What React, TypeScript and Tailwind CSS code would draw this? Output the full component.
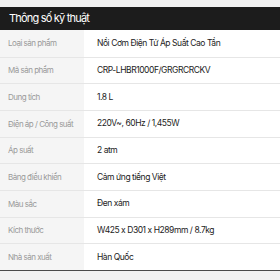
const specs = [
  ["Loại sản phẩm", "Nồi Cơm Điện Tử Áp Suất Cao Tần"],
  ["Mã sản phẩm", "CRP-LHBR1000F/GRGRCRCKV"],
  ["Dung tích", "1.8 L"],
  ["Điện áp / Công suất", "220V~, 60Hz / 1,455W"],
  ["Áp suất", "2 atm"],
  ["Bảng điều khiển", "Cảm ứng tiếng Việt"],
  ["Màu sắc", "Đen xám"],
  ["Kích thước", "W425 x D301 x H289mm / 8.7kg"],
  ["Nhà sản xuất", "Hàn Quốc"],
];

const App = () => {
  return (
    <div className="w-[280px] h-[280px] bg-[#f1f1f1] pt-[7px] font-['Inter',sans-serif] overflow-hidden">
      <div className="h-[23px] bg-[#1c1c1c] flex items-center px-[9px]">
        <h2 className="text-[11px] text-white tracking-[-0.8px]">Thông số kỹ thuật</h2>
      </div>

      {/* Spec rows */}
      <div className="border-b border-[#4a4a4a]">
        {specs.map(([label, value], i) => (
          <div
            key={label}
            className={`flex h-[26.67px] ${i > 0 ? "border-t border-[#e6e6e6]" : ""}`}
          >
            <div className="w-[84px] shrink-0 bg-[#f5f5f5] flex items-center pl-[8px] text-[8px] tracking-[-0.5px] text-[#9a9a9a]">
              {label}
            </div>
            <div className="flex-1 bg-white flex items-center pl-[13px] text-[8.5px] tracking-[-0.45px] text-[#222]">
              {value}
            </div>
          </div>
        ))}
      </div>
    </div>
  );
};

export default App;
